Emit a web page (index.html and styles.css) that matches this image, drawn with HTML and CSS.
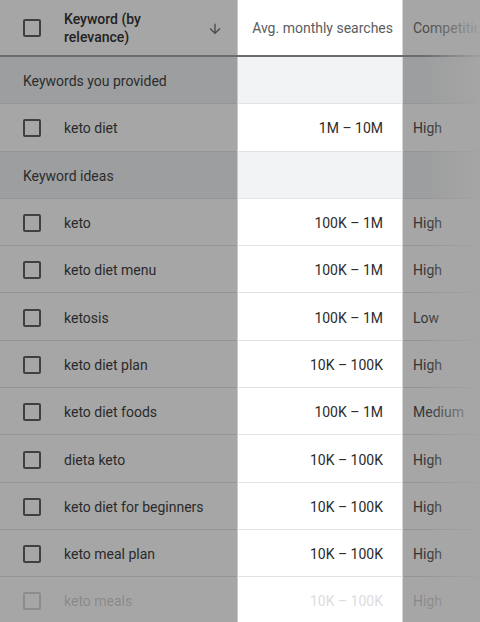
FILE: index.html
```html
<!DOCTYPE html>
<html>
<head>
<meta charset="utf-8">
<link rel="stylesheet" href="styles.css">
</head>
<body>
<div class="table">
  <div class="row head">
    <div class="cell c-check"><span class="box"></span></div>
    <div class="cell c-kw head-kw">
      <span class="head-title">Keyword (by relevance)</span>
      <svg class="arrow" width="16" height="16" viewBox="0 0 24 24"><path d="M20 12l-1.41-1.41L13 16.17V4h-2v12.17l-5.58-5.59L4 12l8 8 8-8z" fill="#4a4a4a"/></svg>
    </div>
    <div class="cell c-avg head-avg">Avg. monthly searches</div>
    <div class="cell c-comp head-comp"><span class="comp-text">Competition</span></div>
  </div>

  <div class="row group">
    <div class="cell c-label">Keywords you provided</div>
    <div class="cell c-avg"></div>
    <div class="cell c-comp"></div>
  </div>
  <div class="row">
    <div class="cell c-check"><span class="box"></span></div>
    <div class="cell c-kw">keto diet</div>
    <div class="cell c-avg">1M – 10M</div>
    <div class="cell c-comp">High</div>
  </div>

  <div class="row group">
    <div class="cell c-label">Keyword ideas</div>
    <div class="cell c-avg"></div>
    <div class="cell c-comp"></div>
  </div>
  <div class="row">
    <div class="cell c-check"><span class="box"></span></div>
    <div class="cell c-kw">keto</div>
    <div class="cell c-avg">100K – 1M</div>
    <div class="cell c-comp">High</div>
  </div>
  <div class="row">
    <div class="cell c-check"><span class="box"></span></div>
    <div class="cell c-kw">keto diet menu</div>
    <div class="cell c-avg">100K – 1M</div>
    <div class="cell c-comp">High</div>
  </div>
  <div class="row">
    <div class="cell c-check"><span class="box"></span></div>
    <div class="cell c-kw">ketosis</div>
    <div class="cell c-avg">100K – 1M</div>
    <div class="cell c-comp">Low</div>
  </div>
  <div class="row">
    <div class="cell c-check"><span class="box"></span></div>
    <div class="cell c-kw">keto diet plan</div>
    <div class="cell c-avg">10K – 100K</div>
    <div class="cell c-comp">High</div>
  </div>
  <div class="row">
    <div class="cell c-check"><span class="box"></span></div>
    <div class="cell c-kw">keto diet foods</div>
    <div class="cell c-avg">100K – 1M</div>
    <div class="cell c-comp">Medium</div>
  </div>
  <div class="row">
    <div class="cell c-check"><span class="box"></span></div>
    <div class="cell c-kw">dieta keto</div>
    <div class="cell c-avg">10K – 100K</div>
    <div class="cell c-comp">High</div>
  </div>
  <div class="row">
    <div class="cell c-check"><span class="box"></span></div>
    <div class="cell c-kw">keto diet for beginners</div>
    <div class="cell c-avg">10K – 100K</div>
    <div class="cell c-comp">High</div>
  </div>
  <div class="row">
    <div class="cell c-check"><span class="box"></span></div>
    <div class="cell c-kw">keto meal plan</div>
    <div class="cell c-avg">10K – 100K</div>
    <div class="cell c-comp">High</div>
  </div>
  <div class="row faded">
    <div class="cell c-check"><span class="box"></span></div>
    <div class="cell c-kw">keto meals</div>
    <div class="cell c-avg">10K – 100K</div>
    <div class="cell c-comp">High</div>
  </div>
  <div class="edge-fade"></div>
</div>
</body>
</html>
```

FILE: styles.css
```css
html, body {
  margin: 0;
  padding: 0;
  background: #a6a6a6;
  overflow: hidden;
}
body {
  width: 480px;
  height: 622px;
  font-family: Roboto, "Noto Sans", Arial, sans-serif;
  font-size: 14px;
  color: #262626;
}
.table {
  position: relative;
  width: 480px;
}
.row {
  display: grid;
  grid-template-columns: 50px 187px 166px 77px;
  height: 47.3px;
  box-sizing: border-box;
  border-bottom: 1px solid #959595;
}
.cell {
  display: flex;
  align-items: center;
  box-sizing: border-box;
  white-space: nowrap;
  overflow: hidden;
  padding-top: 2px;
}
.c-check {
  padding-left: 23px;
}
.box {
  width: 14px;
  height: 14px;
  border: 2px solid #404040;
  border-radius: 2px;
  display: block;
}
.c-kw {
  padding-left: 14px;
  color: #2a2a2a;
}
.c-avg {
  background: #ffffff;
  justify-content: flex-end;
  padding-right: 19px;
  color: #2b2b2b;
  border-left: 1px solid #c8c8c8;
  border-right: 1px solid #d6d6d6;
  margin-bottom: -1px;
  border-bottom: 1px solid #e3e3e3;
}
.c-comp {
  padding-left: 10px;
  color: #333333;
}
.head {
  height: 57px;
  border-bottom: 2px solid #6a6c6f;
}
.head .cell {
  padding-top: 1px;
}
.head .c-avg {
  margin-bottom: 0;
  border-bottom: none;
}
.head-kw {
  font-weight: 500;
  color: #222222;
  line-height: 18px;
  justify-content: space-between;
  padding-right: 14px;
  white-space: normal;
}
.head-title {
  width: 100px;
}
.arrow {
  flex: none;
  margin-top: 2px;
}
.head-avg {
  color: #5a5d60;
  padding-right: 9px;
}
.head-comp {
  color: #4a4a4a;
}
.comp-text {
  display: block;
  width: 64px;
  overflow: hidden;
  white-space: nowrap;
}
.group {
  background: #9d9e9f;
}
.group .c-avg {
  background: #f1f3f4;
}
.c-label {
  grid-column: 1 / 3;
  padding-left: 23px;
  color: #2c2c2c;
}
.faded .cell {
  color: rgba(60, 60, 60, 0.28);
}
.faded .c-avg {
  color: #dcdcdc;
}
.faded .box {
  border-color: rgba(64, 64, 64, 0.25);
}
.edge-fade {
  position: absolute;
  top: 0;
  right: 0;
  width: 56px;
  height: 622px;
  background: linear-gradient(to right, rgba(166,166,166,0) 0%, rgba(166,166,166,0.9) 100%);
  pointer-events: none;
}
```
